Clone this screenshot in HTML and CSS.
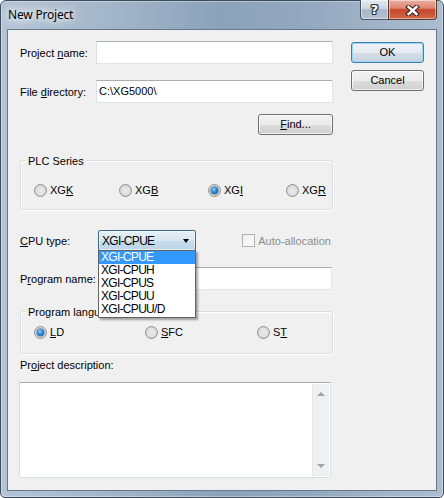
FILE: index.html
```html
<!DOCTYPE html>
<html>
<head>
<meta charset="utf-8">
<link rel="stylesheet" href="styles.css">
</head>
<body>
<div class="window">
  <div class="titlebar">
    <span class="title">New Project</span>
    <div class="caption">
      <div class="cbtn help">?</div>
      <div class="cbtn close">
        <svg width="15" height="11" viewBox="0 0 15 11"><path d="M3.5 2 L11.5 9 M11.5 2 L3.5 9" stroke="#3b2620" stroke-width="4.6" stroke-linecap="square" fill="none"/><path d="M3.5 2 L11.5 9 M11.5 2 L3.5 9" stroke="#ffffff" stroke-width="2.4" stroke-linecap="square" fill="none"/></svg>
      </div>
    </div>
  </div>
  <div class="client">
    <div class="main">
      <div class="row r1">
        <span class="lbl">Project <u>n</u>ame:</span>
        <div class="input"></div>
      </div>
      <div class="row r2">
        <span class="lbl">File <u>d</u>irectory:</span>
        <div class="input">C:\XG5000\</div>
      </div>
      <div class="find-row">
        <div class="btn find"><u>F</u>ind...</div>
      </div>
      <div class="group plc">
        <span class="legend">PLC Series</span>
        <div class="radios">
          <div class="opt w85"><span class="radio"></span>XG<u>K</u></div>
          <div class="opt w89"><span class="radio"></span>XG<u>B</u></div>
          <div class="opt w78"><span class="radio on"></span>XG<u>I</u></div>
          <div class="opt"><span class="radio"></span>XG<u>R</u></div>
        </div>
      </div>
      <div class="row cpu">
        <span class="lbl wide"><u>C</u>PU type:</span>
        <div class="combo">
          <span class="combo-text">XGI-CPUE</span>
          <span class="arrow"></span>
          <div class="list">
            <div class="item sel">XGI-CPUE</div>
            <div class="item">XGI-CPUH</div>
            <div class="item">XGI-CPUS</div>
            <div class="item">XGI-CPUU</div>
            <div class="item">XGI-CPUU/D</div>
          </div>
        </div>
        <div class="check">
          <span class="box"></span>Auto-allocation
        </div>
      </div>
      <div class="row r3">
        <span class="lbl wide">P<u>r</u>ogram name:</span>
        <div class="input short"></div>
      </div>
      <div class="group lang">
        <span class="legend">Program language</span>
        <div class="radios r-lang">
          <div class="opt w111"><span class="radio on"></span><u>L</u>D</div>
          <div class="opt w112"><span class="radio"></span><u>S</u>FC</div>
          <div class="opt"><span class="radio"></span>S<u>T</u></div>
        </div>
      </div>
      <div class="desc-lbl">Pr<u>o</u>ject description:</div>
      <div class="textarea">
        <div class="scroll">
          <span class="sa up"></span>
          <span class="sa down"></span>
        </div>
      </div>
    </div>
    <div class="side">
      <div class="btn ok">OK</div>
      <div class="btn cancel">Cancel</div>
    </div>
  </div>
</div>
</body>
</html>
```

FILE: styles.css
```css
* { box-sizing: border-box; margin: 0; padding: 0; }
body {
  margin: 0;
  width: 444px;
  height: 498px;
  overflow: hidden;
  font-family: "Liberation Sans", Arial, sans-serif;
  font-size: 11px;
  color: #000;
  background: #fff;
}
u { text-decoration: underline; text-underline-offset: 1px; }

.window {
  width: 444px;
  height: 498px;
  border: 1px solid #3d4b5a;
  border-radius: 6px 6px 5px 5px;
  background: linear-gradient(90deg, #b4c4d6 0%, #a5b7cb 22%, #8ca2bb 50%, #95a9c0 72%, #adbed1 100%);
  box-shadow: inset 0 0 0 1px rgba(255,255,255,0.35);
  display: flex;
  flex-direction: column;
}
.titlebar {
  height: 28px;
  display: flex;
  align-items: flex-start;
  padding-left: 7px;
}
.title {
  font-family: "Noto Sans", "Open Sans", sans-serif;
  font-size: 12px;
  line-height: 27px;
  color: #000;
  letter-spacing: -0.2px;
  text-shadow: 0 0 6px #fff, 0 0 10px #fff, 0 0 16px rgba(255,255,255,0.9);
}
.caption {
  margin-left: auto;
  margin-right: 6px;
  margin-top: -1px;
  display: flex;
  height: 20px;
}
.cbtn {
  height: 20px;
  border: 1px solid #4a5665;
  border-top: none;
  display: flex;
  align-items: center;
  justify-content: center;
  box-shadow: inset 0 0 0 1px rgba(255,255,255,0.45);
}
.help {
  width: 29px;
  border-radius: 0 0 0 4px;
  background: linear-gradient(#e4e9ef 0%, #ccd5df 45%, #a9b6c5 52%, #b4c1cf 100%);
  color: #fff;
  font-family: "DejaVu Sans", sans-serif;
  font-weight: bold;
  font-size: 13px;
  line-height: 18px;
  text-shadow: 1px 0 #2b3540, -1px 0 #2b3540, 0 1px #2b3540, 0 -1px #2b3540, 1px 1px #2b3540, -1px -1px #2b3540, 1px -1px #2b3540, -1px 1px #2b3540;
}
.close {
  width: 49px;
  margin-left: -1px;
  border-radius: 0 0 4px 0;
  border-color: #5a3a36;
  background: linear-gradient(#eab0a2 0%, #dc8670 42%, #c7472c 52%, #d2694a 100%);
}
.close svg { display: block; margin-top: 1px; }

.client {
  flex: 1;
  margin: 0 6px 6px 6px;
  border: 1px solid #67778a;
  background: #f0f0f0;
  display: flex;
  padding-left: 12px;
}
.main {
  width: 313px;
  display: flex;
  flex-direction: column;
}
.side {
  margin-left: 18px;
  width: 73px;
  display: flex;
  flex-direction: column;
}

.row {
  display: flex;
  align-items: center;
  height: 23px;
}
.r1 { margin-top: 11px; }
.r2 { margin-top: 16px; }
.lbl { width: 76px; flex: none; }
.lbl.wide { width: 78px; }
.input {
  flex: 1;
  height: 23px;
  background: #fff;
  border: 1px solid #e2e3ea;
  border-top-color: #abadb3;
  border-left-color: #dbdfe6;
  padding-left: 2px;
  line-height: 20px;
}
.input.short { margin-right: 1px; }

.find-row {
  margin-top: 11px;
  display: flex;
  justify-content: flex-end;
}
.btn {
  height: 21px;
  border: 1px solid #707070;
  border-radius: 3px;
  background: linear-gradient(#f2f2f2 0%, #ebebeb 50%, #dddddd 51%, #cfcfcf 100%);
  box-shadow: inset 0 0 0 1px rgba(255,255,255,0.7);
  display: flex;
  align-items: center;
  justify-content: center;
  line-height: 13px;
}
.find { width: 75px; }
.ok {
  margin-top: 12px;
  border-color: #3c7fb1;
  background: linear-gradient(#eef3f7 0%, #e3eaf0 50%, #d3dee7 51%, #c6d3de 100%);
  box-shadow: inset 0 0 0 1px #9fd6f3;
}
.cancel { margin-top: 7px; }

.group {
  border: 1px solid #d5dfe5;
  border-radius: 3px;
  box-shadow: inset 1px 1px 0 #fff, 1px 1px 0 #fff;
  display: flex;
  flex-direction: column;
}
.legend {
  display: block;
  width: fit-content;
  margin: -6px 0 0 5px;
  padding: 0 2px;
  background: #f0f0f0;
  line-height: 13px;
  white-space: nowrap;
}
.plc { margin-top: 25px; height: 50px; }
.radios {
  display: flex;
  align-items: center;
  height: 13px;
  margin-top: 16px;
  padding-left: 13px;
}
.r-lang { margin-top: 7px; }
.lang { margin-top: 21px; height: 43px; }
.opt { display: flex; align-items: center; line-height: 13px; }
.w85 { width: 85px; }
.w89 { width: 89px; }
.w78 { width: 78px; }
.w111 { width: 111px; }
.w112 { width: 112px; }
.radio {
  width: 13px;
  height: 13px;
  border-radius: 50%;
  border: 1px solid #8e8f8f;
  background: radial-gradient(circle at 50% 50%, #ececec 0%, #e0e0e0 45%, #f8f8f8 100%);
  margin-right: 3px;
  flex: none;
  position: relative;
  box-shadow: inset 0 0 0 1px #d2d2d2;
}
.radio.on::after {
  content: "";
  position: absolute;
  left: 2px;
  top: 2px;
  width: 7px;
  height: 7px;
  border-radius: 50%;
  background: radial-gradient(circle at 40% 35%, #8fd1ff 0%, #2a8ad4 45%, #0c4a8e 100%);
  box-shadow: 0 0 0 0.5px #1f4f80;
}

.cpu { margin-top: 20px; height: 21px; }
.combo {
  position: relative;
  width: 98px;
  height: 21px;
  border: 1px solid #3c6a8f;
  border-radius: 2px;
  background: linear-gradient(#e6f0f7 0%, #d8e7f2 50%, #c8dcec 51%, #bcd5e8 100%);
  box-shadow: inset 0 0 0 1px rgba(255,255,255,0.5);
  display: flex;
  align-items: center;
  padding-left: 3px;
}
.combo-text { font-size: 12px; letter-spacing: -0.7px; }
.arrow {
  position: absolute;
  right: 6px;
  top: 8px;
  width: 0;
  height: 0;
  border-left: 3.5px solid transparent;
  border-right: 3.5px solid transparent;
  border-top: 4px solid #000;
}
.list {
  position: absolute;
  left: -1px;
  top: 19px;
  width: 98px;
  height: 68px;
  border: 1px solid #646464;
  background: #fff;
  box-shadow: 2px 2px 2px rgba(0,0,0,0.35);
  z-index: 10;
}
.item {
  height: 13px;
  line-height: 13px;
  padding-left: 2px;
  font-size: 12px;
  letter-spacing: -0.7px;
}
.item.sel { background: #3399ff; color: #fff; }
.check {
  margin-left: auto;
  margin-right: 2px;
  display: flex;
  align-items: center;
  color: #8d8d8d;
}
.box {
  width: 13px;
  height: 13px;
  border: 1px solid #b1b1b1;
  background: linear-gradient(135deg, #f0f0f0, #fafafa);
  margin-right: 3px;
}
.r3 { margin-top: 16px; }

.desc-lbl { margin-top: 5px; line-height: 13px; }
.textarea {
  margin-top: 10px;
  margin-left: -1px;
  width: 312px;
  height: 96px;
  background: #fff;
  border: 1px solid #dbdfe6;
  border-top-color: #abadb3;
  display: flex;
  justify-content: flex-end;
}
.scroll {
  width: 17px;
  margin: 1px 1px 1px 0;
  background: #f0f0f0;
  border-left: 1px solid #e6e6e6;
  display: flex;
  flex-direction: column;
  justify-content: space-between;
  align-items: center;
  padding: 8px 0 8px;
}
.sa { width: 0; height: 0; border-left: 4px solid transparent; border-right: 4px solid transparent; }
.sa.up { border-bottom: 4px solid #a3a3a3; }
.sa.down { border-top: 4px solid #a3a3a3; }
```
